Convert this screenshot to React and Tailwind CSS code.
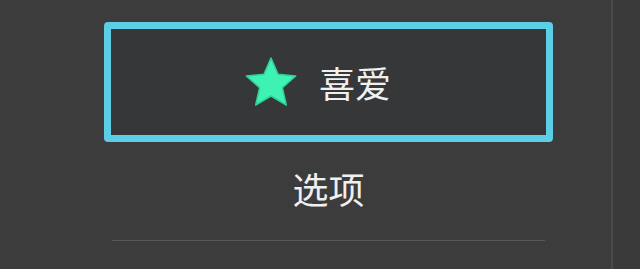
const FONT = { fontFamily: '"Noto Sans CJK SC", "Noto Sans", sans-serif' };

function Star() {
  // 5-point star, rounded joins
  return (
    <svg width="54" height="52" viewBox="0 0 54 52">
      <polygon
        points="27,2 34.05,18.3 51.7,20 38.4,31.7 42.3,49 27,40 11.7,49 15.6,31.7 2.3,20 19.95,18.3"
        fill="#3ef2b3"
        stroke="#2fcf98"
        strokeWidth="1.5"
        strokeLinejoin="round"
      />
    </svg>
  );
}

export default function App() {
  return (
    <div className="w-[640px] h-[269px] bg-[#3c3c3c] flex overflow-hidden" style={FONT}>
      {/* menu panel */}
      <div className="w-[611px] h-full pl-[104px] pt-[22px]">
        <div className="w-[449px] flex flex-col">
          <div className="h-[120px] rounded-[4px] border-[7px] border-[#5ccfe7] bg-[#363739] flex items-center justify-center gap-[21px] pr-[22px]">
            <Star />
            <span className="text-[36px] leading-none text-[#f0f0f0] pb-[1px]">喜爱</span>
          </div>
          <div className="h-[98px] flex items-center justify-center">
            <span className="text-[36px] leading-none text-[#f0f0f0] mb-[6px]">选项</span>
          </div>
          <div className="mx-[8px] h-[1px] bg-[#585858]" />
        </div>
      </div>
      <div className="w-[2px] h-full bg-[#4a4a4a]" />
      <div className="flex-1 h-full bg-[#3a3a3a]" />
    </div>
  );
}
